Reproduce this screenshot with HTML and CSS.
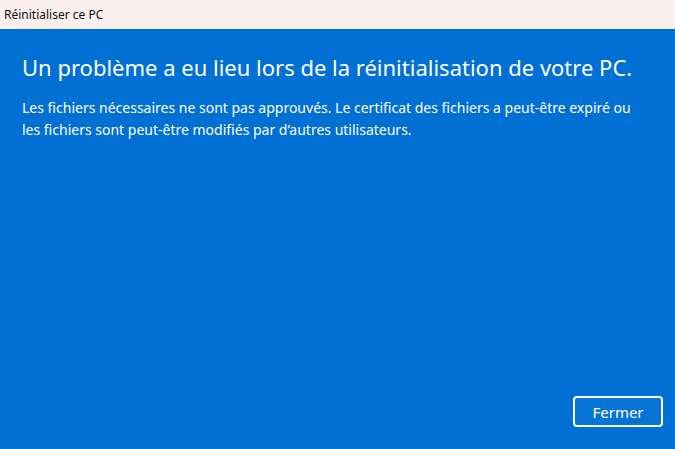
FILE: index.html
```html
<!DOCTYPE html>
<html lang="fr">
  <head>
    <meta charset="UTF-8" />
    <title>Réinitialiser ce PC</title>
    <link rel="stylesheet" href="styles.css">
  </head>
  <body>
    <div class="titlebar">Réinitialiser ce PC</div>
    <div class="panel">
      <div class="message">
        <h1>Un problème a eu lieu lors de la réinitialisation de votre PC.</h1>
        <p>Les fichiers nécessaires ne sont pas approuvés. Le certificat des fichiers a peut-être expiré ou les fichiers sont peut-être modifiés par d’autres utilisateurs.</p>
      </div>
      <div class="actions">
        <button class="close-btn">Fermer</button>
      </div>
    </div>
  </body>
</html>
```

FILE: styles.css
```css
html, body {
    height: 100%;
}
body {
    margin: 0;
    font-family: "Noto Sans", "Open Sans", sans-serif;
    display: flex;
    flex-direction: column;
    background-color: #0070d4;
    overflow: hidden;
}
.titlebar {
    height: 29px;
    line-height: 29px;
    padding-left: 4px;
    font-size: 12px;
    color: #111;
    background-color: #f9efed;
}
.panel {
    flex: 1;
    display: flex;
    flex-direction: column;
    padding: 20px 12px 22px 22px;
    color: #fff;
}
.message {
    padding-right: 28px;
}
h1 {
    margin: 0;
    font-size: 22px;
    font-weight: normal;
    line-height: 36px;
}
p {
    margin: 12px 0 0 0;
    font-size: 14px;
    line-height: 22px;
}
.actions {
    margin-top: auto;
    display: flex;
    justify-content: flex-end;
}
.close-btn {
    width: 90px;
    height: 31px;
    border: 2px solid #fff;
    border-radius: 4px;
    background-color: #0574d5;
    color: #fff;
    font-family: inherit;
    font-size: 15px;
}
```
